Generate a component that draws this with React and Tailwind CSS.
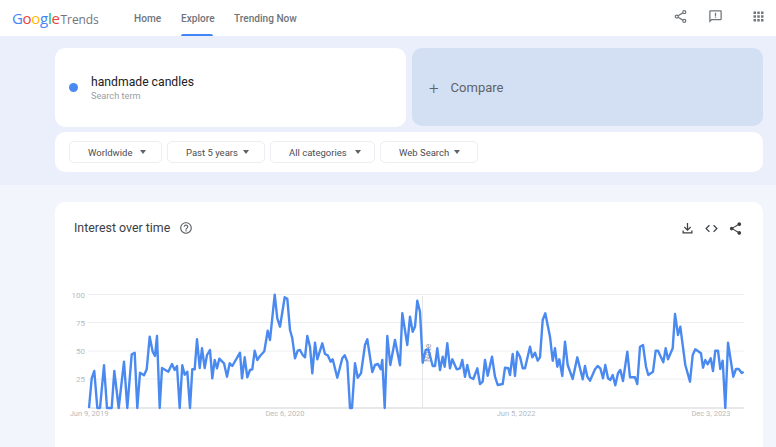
const seg1 = [[147,384],[155,295],[163,273],[172,384],[180,384],[192,256],[201,384],[215,384],[223,273],[236,384],[252,245],[262,384],[275,223],[284,218],[292,384],[300,278],[312,286],[320,268],[329,170],[338,215],[345,228],[351,168],[359,384],[366,264],[385,275],[396,252],[404,270],[411,258],[419,384],[427,256],[434,284],[442,275],[450,384],[457,268],[464,268],[471,178],[479,264],[486,205],[494,264],[501,225],[510,210],[517,295],[524,240],[531,265],[538,236],[552,250],[561,290],[569,250],[577,258],[600,218],[606,295],[614,232],[622,292],[630,270],[637,268],[644,212],[652,240],[660,228],[673,214],[683,152],[690,180]]
const seg2 = [[44,44],[52,115],[60,140],[74,52],[82,56],[90,150],[97,175],[105,235],[113,212],[120,210],[128,225],[135,232],[142,168],[150,200],[157,280],[165,188],[172,238],[187,190],[195,222],[203,226],[212,245],[218,238],[232,293],[247,235],[254,226],[262,245],[270,384],[276,384],[285,250],[293,293],[303,280],[315,195],[322,178],[337,276],[345,255],[354,252],[362,268],[367,240],[374,384],[382,168],[391,255],[405,180],[420,256],[427,100],[442,195],[450,110],[458,155],[465,140],[472,62],[480,95],[488,248],[497,210],[505,208],[518,258],[525,258],[532,205],[540,270],[548,230],[554,260],[562,190],[570,265],[577,238],[590,268],[600,265],[607,240],[615,290],[622,255],[630,292],[640,297],[652,265],[660,312],[668,305],[675,240],[683,287],[696,230],[705,290],[713,315]]
const seg3 = [[8,312],[15,263],[25,265],[30,285],[38,222],[45,288],[52,215],[60,230],[68,265],[75,265],[90,200],[97,232],[105,218],[113,242],[120,232],[128,120],[136,100],[150,170],[158,242],[165,205],[172,260],[178,238],[187,288],[195,185],[203,255],[218,297],[232,232],[248,298],[255,258],[262,290],[270,302],[285,268],[293,258],[301,265],[309,295],[316,255],[324,295],[331,300],[338,285],[346,316],[354,280],[361,270],[369,303],[382,215],[390,292],[405,292],[412,312],[420,200],[429,195],[438,260],[445,285],[459,275],[467,212],[474,212],[490,247],[497,205],[504,238],[518,205],[525,102],[534,165],[541,140],[556,255],[570,305],[578,225],[586,208],[603,220],[609,263],[616,240],[623,253],[632,235],[639,273],[646,212],[654,212],[661,267],[668,242],[676,384],[684,188],[700,290],[708,267],[716,267],[725,279],[731,276]]

// zoom crops to page pixels, then to the chart's own box (starts at x 55, y 285)
const toPoints = (seg, ox) => seg.map(([x, y]) => `${(ox + x / 3 - 55).toFixed(1)},${(280 + y / 3 - 285).toFixed(1)}`).join(' ')
const trend = [toPoints(seg1, 40), toPoints(seg2, 260), toPoints(seg3, 500)].join(' ')

const gridLines = [
  { y: 9.5, label: '100' },
  { y: 37.5, label: '75' },
  { y: 66, label: '50' },
  { y: 94, label: '25' },
]

const dateLabels = [
  { x: 34, label: 'Jun 9, 2019' },
  { x: 230, label: 'Dec 6, 2020' },
  { x: 461, label: 'Jun 5, 2022' },
  { x: 656, label: 'Dec 3, 2023' },
]

function Caret() {
  return <span className="w-0 h-0 border-x-[3.5px] border-x-transparent border-t-[4px] border-t-[#5f6368]" />
}

function Filter({ label, width, gap }) {
  return (
    <div className={`h-[22px] pl-[18px] flex items-center rounded-[5px] border border-[#eceef1] bg-white text-[9.5px] text-[#4a4d51] ${width} ${gap}`}>
      <span className="mt-[2px]">{label}</span>
      <Caret />
    </div>
  )
}

function ShareOutline({ className }) {
  return (
    <svg viewBox="0 0 24 24" className={className} fill="none" stroke="currentColor" strokeWidth="2">
      <circle cx="18" cy="5" r="2.4" />
      <circle cx="6" cy="12" r="2.4" />
      <circle cx="18" cy="19" r="2.4" />
      <path d="M8.1 10.8l7.8-4.6M8.1 13.2l7.8 4.6" />
    </svg>
  )
}

function ShareFilled({ className }) {
  return (
    <svg viewBox="0 0 24 24" className={className} fill="currentColor">
      <path d="M18 16.08c-.76 0-1.44.3-1.96.77L8.91 12.7c.05-.23.09-.46.09-.7s-.04-.47-.09-.7l7.05-4.11c.54.5 1.25.81 2.04.81 1.66 0 3-1.34 3-3s-1.34-3-3-3-3 1.34-3 3c0 .24.04.47.09.7L8.04 9.81C7.5 9.31 6.79 9 6 9c-1.66 0-3 1.34-3 3s1.34 3 3 3c.79 0 1.5-.31 2.04-.81l7.12 4.16c-.05.21-.08.43-.08.65 0 1.61 1.31 2.92 2.92 2.92s2.92-1.31 2.92-2.92-1.31-2.92-2.92-2.92z" />
    </svg>
  )
}

function Feedback({ className }) {
  return (
    <svg viewBox="0 0 24 24" className={className} fill="currentColor">
      <path d="M20 2H4c-1.1 0-2 .9-2 2v18l4-4h14c1.1 0 2-.9 2-2V4c0-1.1-.9-2-2-2zm0 14H5.2L4 17.2V4h16v12z" />
      <path d="M11 6h2v5h-2zM11 12h2v2h-2z" />
    </svg>
  )
}

function Apps({ className }) {
  return (
    <svg viewBox="0 0 24 24" className={className} fill="currentColor">
      <path d="M4 8h4V4H4v4zm6 12h4v-4h-4v4zm-6 0h4v-4H4v4zm0-6h4v-4H4v4zm6 0h4v-4h-4v4zm6-10v4h4V4h-4zm-6 4h4V4h-4v4zm6 6h4v-4h-4v4zm0 6h4v-4h-4v4z" />
    </svg>
  )
}

function Download({ className }) {
  return (
    <svg viewBox="0 0 24 24" className={className} fill="currentColor">
      <path d="M13 3h-2v9.2L7.7 8.9 6.3 10.3 12 16l5.7-5.7-1.4-1.4-3.3 3.3V3zM4 15v5h16v-5h-2v3H6v-3H4z" />
    </svg>
  )
}

function Code({ className }) {
  return (
    <svg viewBox="0 0 24 24" className={className} fill="currentColor">
      <path d="M9.4 16.6 4.8 12l4.6-4.6L8 6l-6 6 6 6 1.4-1.4zm5.2 0 4.6-4.6-4.6-4.6L16 6l6 6-6 6-1.4-1.4z" />
    </svg>
  )
}

function Help({ className }) {
  return (
    <svg viewBox="0 0 24 24" className={className} fill="currentColor">
      <path d="M11 18h2v-2h-2v2zm1-16C6.48 2 2 6.48 2 12s4.48 10 10 10 10-4.48 10-10S17.52 2 12 2zm0 18c-4.41 0-8-3.59-8-8s3.59-8 8-8 8 3.59 8 8-3.59 8-8 8zm0-14c-2.21 0-4 1.79-4 4h2c0-1.1.9-2 2-2s2 .9 2 2c0 2-3 1.75-3 5h2c0-2.25 3-2.5 3-5 0-2.21-1.79-4-4-4z" />
    </svg>
  )
}

function Chart() {
  return (
    <svg viewBox="0 0 708 135" className="w-[708px] h-[135px] block">
      {gridLines.map((g) => (
        <g key={g.label}>
          <line x1="33" x2="689" y1={g.y} y2={g.y} stroke="#eceef0" strokeWidth="1" />
          <text x="30" y={g.y + 3} textAnchor="end" fontSize="8" fill="#b8babd">{g.label}</text>
        </g>
      ))}
      <line x1="33" x2="689" y1="123" y2="123" stroke="#cfd1d4" strokeWidth="1" />
      <line x1="367.5" x2="367.5" y1="11" y2="123" stroke="#e4e6e9" strokeWidth="1" />
      <text x="0" y="0" fontSize="8.5" fill="#9aa0a6" transform="translate(376 77) rotate(-90)">Note</text>
      <polyline points={trend} fill="none" stroke="#4a8af0" strokeWidth="2.4" strokeLinejoin="round" />
      {dateLabels.map((d) => (
        <text key={d.label} x={d.x} y="131" textAnchor="middle" fontSize="7.5" fill="#b8babd">{d.label}</text>
      ))}
    </svg>
  )
}

export default function App() {
  return (
    <div className="w-[776px] h-[447px] overflow-hidden bg-[#f3f5fd] font-['Roboto',sans-serif]">
      <header className="h-[36px] bg-white flex items-center">
        <div className="w-[134px] pl-[12px] flex items-baseline leading-none font-['Open_Sans',sans-serif]">
          <span className="text-[15px] tracking-[-0.3px] text-[#4285f4]">G</span>
          <span className="text-[15px] tracking-[-0.3px] text-[#ea4335]">o</span>
          <span className="text-[15px] tracking-[-0.3px] text-[#fbbc05]">o</span>
          <span className="text-[15px] tracking-[-0.3px] text-[#4285f4]">g</span>
          <span className="text-[15px] tracking-[-0.3px] text-[#34a853]">l</span>
          <span className="text-[15px] tracking-[-0.3px] text-[#ea4335] mr-[1px]">e</span>
          <span className="text-[12px] tracking-[-0.1px] text-[#70757a]">Trends</span>
        </div>
        <nav className="flex h-full gap-[21px] text-[10.1px] font-medium text-[#70757a]">
          <div className="w-[26px] pt-[1px] flex items-center whitespace-nowrap">Home</div>
          <div className="w-[32px] pt-[1px] relative flex items-center whitespace-nowrap">
            Explore
            <span className="absolute left-0 right-0 bottom-0 h-[2px] rounded-t-[2px] bg-[#4285f4]" />
          </div>
          <div className="pt-[1px] flex items-center whitespace-nowrap">Trending Now</div>
        </nav>
        <div className="ml-auto pr-[10px] pb-[3px] flex items-center text-[#70757a]">
          <ShareOutline className="w-[15px] h-[15px]" />
          <Feedback className="w-[15px] h-[15px] ml-[20px]" />
          <Apps className="w-[15px] h-[15px] ml-[28px]" />
        </div>
      </header>

      <div className="h-[149px] bg-[#ebeefb] px-[55px] pr-[13px] pt-[12px]">
        <div className="flex gap-[6px]">
          <div className="w-[351px] h-[79px] bg-white rounded-[10px] flex items-center pl-[14px]">
            <span className="w-[9px] h-[9px] rounded-full bg-[#4a8af0]" />
            <div className="ml-[13px] mt-[1px]">
              <div className="text-[12.2px] leading-[16px] text-[#202124]">handmade candles</div>
              <div className="text-[9.2px] leading-[12px] text-[#9aa0a6]">Search term</div>
            </div>
          </div>
          <div className="w-[351px] h-[78px] pt-[2px] bg-[#d3dff3] rounded-[10px] flex items-center pl-[17px] text-[#5f6368]">
            <span className="text-[17px] leading-none font-light">+</span>
            <span className="ml-[12px] text-[13px]">Compare</span>
          </div>
        </div>
        <div className="mt-[5px] w-[708px] h-[40px] bg-white rounded-[10px] flex items-center pl-[14px] gap-[5px]">
          <Filter label="Worldwide" width="w-[93px]" gap="gap-[8px]" />
          <Filter label="Past 5 years" width="w-[98px]" gap="gap-[5px]" />
          <Filter label="All categories" width="w-[105px]" gap="gap-[8px]" />
          <Filter label="Web Search" width="w-[98px]" gap="gap-[5px]" />
        </div>
      </div>

      <section className="mt-[17px] ml-[55px] w-[708px] h-[300px] bg-white rounded-t-[10px]">
        <div className="h-[50px] pt-[2px] flex items-center pl-[19px] pr-[20px]">
          <h2 className="text-[12.4px] text-[#3c4043]">Interest over time</h2>
          <Help className="w-[14px] h-[14px] ml-[9px] text-[#5f6368]" />
          <div className="ml-auto flex items-center gap-[9px] text-[#3c4043]">
            <Download className="w-[15px] h-[15px]" />
            <Code className="w-[15px] h-[15px]" />
            <ShareFilled className="w-[15px] h-[15px]" />
          </div>
        </div>
        <div className="mt-[33px]">
          <Chart />
        </div>
      </section>
    </div>
  )
}
